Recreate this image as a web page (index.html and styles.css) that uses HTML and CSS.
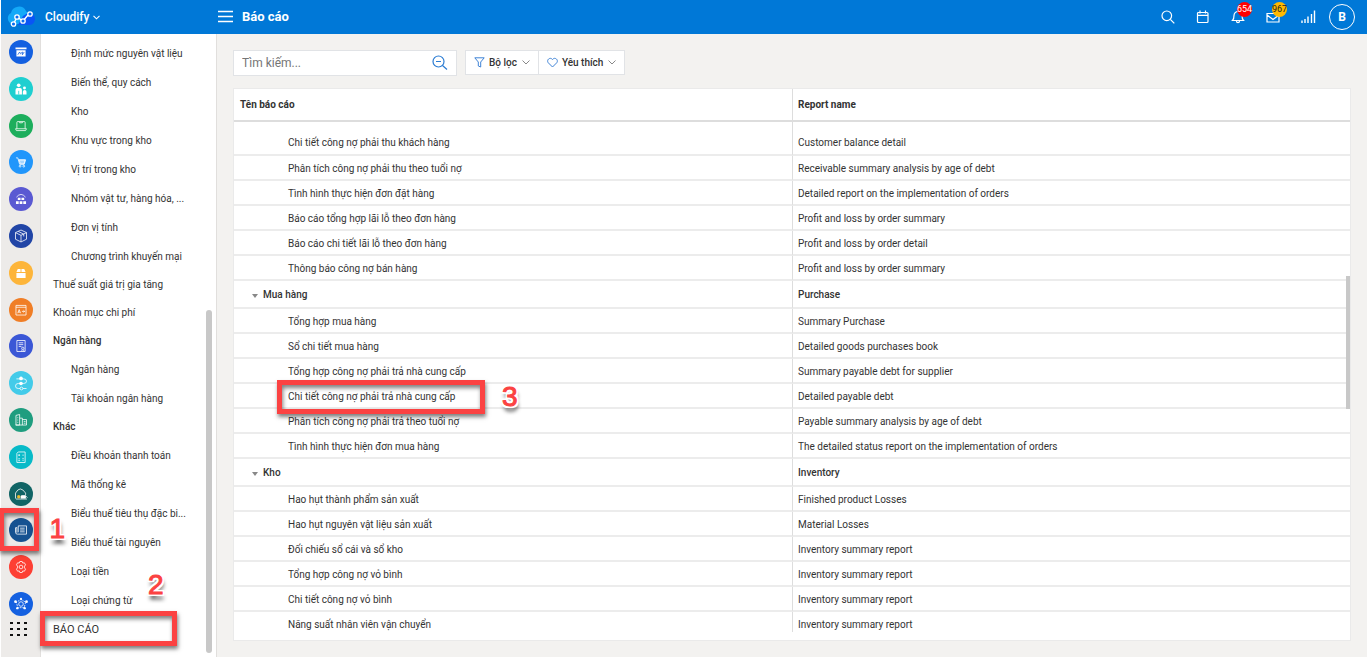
FILE: index.html
```html
<!DOCTYPE html>
<html lang="vi">
<head>
<meta charset="utf-8">
<title>Báo cáo</title>
<link rel="stylesheet" href="styles.css">
</head>
<body>
<header class="topbar">
  <svg class="logo" viewBox="0 0 30 24"><path d="M6 19a6 6 0 0 1-1-11A8 8 0 0 1 20 6l3 4-7 9z" fill="#14a9f8"/><path d="M12 20l5-9 5-3a6 6 0 0 1 2 12z" fill="#0a55f5"/><path d="M8 18l3-6 6 4 5-6" fill="none" stroke="#fff" stroke-width="1.400"/><g fill="#0a6cf0" stroke="#fff" stroke-width="1.300"><circle cx="7.500" cy="19" r="2.200"/><circle cx="11" cy="12" r="2.200"/><circle cx="17" cy="16" r="2.200"/><circle cx="24" cy="9" r="2.200"/></g></svg>
  <button class="brand">Cloudify <svg width="7" height="5" viewBox="0 0 7 5"><path d="M.5.8l3 3 3-3" fill="none" stroke="#fff" stroke-width="1.100"/></svg></button>
  <button class="menu" aria-label="Menu"><svg width="16" height="14" viewBox="0 0 16 14"><path d="M0 1.500h15M0 6.500h15M0 11.500h15" stroke="#fff" stroke-width="1.500"/></svg></button>
  <h1 class="title">Báo cáo</h1>
  <nav class="tools">
    <button aria-label="Tìm"><svg width="14" height="14" viewBox="0 0 14 14" fill="none" stroke="#fff" stroke-width="1.200"><circle cx="5.800" cy="5.800" r="4.800"/><path d="M9.300 9.300l4 4"/></svg></button>
    <button aria-label="Lịch"><svg width="14" height="14" viewBox="0 0 14 14" fill="none" stroke="#fff" stroke-width="1.200"><rect x="1.500" y="2.500" width="10.500" height="10" rx="1"/><path d="M1.500 5.300H12M4 .5v3M9.500.5v3"/></svg></button>
    <button aria-label="Thông báo"><svg width="14" height="14" viewBox="0 0 14 14" fill="none" stroke="#fff" stroke-width="1.200"><path d="M1.500 10.500h11c-1.500-1.500-1.500-3-1.500-5a4 4 0 0 0-8 0c0 2 0 3.500-1.500 5zM5.500 11c0 2.200 3 2.200 3 0"/></svg><span class="badge red">654</span></button>
    <button aria-label="Thư"><svg width="14" height="14" viewBox="0 0 14 14" fill="none" stroke="#fff" stroke-width="1.200"><path d="M1 3.500h12v8.500H1zM1 5l6 4.500L13 5"/></svg><span class="badge amber">967</span></button>
    <button aria-label="Tín hiệu"><svg width="15" height="14" viewBox="0 0 15 14"><path d="M1 10.500V13M4 9v4M7 6.500V13M10.500 4v9M13.500.5V13" stroke="#fff" stroke-width="1.400"/></svg></button>
    <button class="avatar">B</button>
  </nav>
</header>
<div class="shell">
  <aside class="rail">
    <div class="apps">
      <button class="app c1" aria-label="Bàn làm việc"><svg viewBox="0 0 24 24"><path class="solid" d="M6 7h12v2H6zM7 10h10v7H7z"/><path d="M8.500 15l2-3 1 2 2-2v3l2-3" stroke="#1460e0"/></svg></button>
      <button class="app c2" aria-label="Khách hàng"><svg viewBox="0 0 24 24"><g class="solid"><circle cx="9.500" cy="8" r="2"/><path d="M6 18v-5q0-2 2-2h3q2 0 2 2v5z"/><circle cx="15.800" cy="11" r="1.600"/><path d="M14 18v-3q0-2 2-2t2 2v3z"/></g><path d="M9.500 14v4" stroke="#1fcfd0"/></svg></button>
      <button class="app c3" aria-label="Bán hàng"><svg viewBox="0 0 24 24"><path d="M7.500 15V8q0-.8.8-.8h7.400q.8 0 .8.800v7M6 15h12l-1 2H7zM10.500 7.500v1h3v-1" /></svg></button>
      <button class="app c4" aria-label="Mua hàng"><svg viewBox="0 0 24 24"><path d="M6.500 7.500h2l2 7h5l1.500-5H9.300" /><path d="M10 10h6.500l-1.200 4h-4z" fill="#fff" fill-opacity=".6"/><circle cx="11" cy="16.500" r="1"/><circle cx="15" cy="16.500" r="1"/></svg></button>
      <button class="app c5" aria-label="Kho"><svg viewBox="0 0 24 24"><path d="M7 10q5-6 10 0"/><path class="solid" d="M8.500 10.500h3v2.700h-3zM12.500 10.500h3v2.700h-3zM6.500 14.500h3v3h-3zM10.500 14.500h3v3h-3zM14.500 14.500h3v3h-3z"/></svg></button>
      <button class="app c6" aria-label="Sản phẩm"><svg viewBox="0 0 24 24"><path d="M12 5.500l6 2.800v7.200l-6 3-6-3V8.300zM6 8.300l6 3 6-3M12 11.300v7M9 7l6 3v2.500"/></svg></button>
      <button class="app c7" aria-label="Tài sản"><svg viewBox="0 0 24 24"><path class="solid" d="M8.500 7.500h3v3.500H7zM12.500 7.500h3L17 11h-4.500zM7 12h10v5.500H7z"/></svg></button>
      <button class="app c8" aria-label="Công cụ"><svg viewBox="0 0 24 24"><path d="M6.500 7h11v10.500h-11zM6.500 9h11M8.500 15.500l1.500-4 1.500 4M9 14.300h2M13 13.500h3M14.700 12.300l1.300 1.200-1.300 1.200"/></svg></button>
      <button class="app c9" aria-label="Hóa đơn"><svg viewBox="0 0 24 24"><path d="M7.500 6h9v12h-9zM9.500 8.500h5M9.500 10.500h5M9.500 12.500h3"/><circle cx="14" cy="14.500" r="1.300"/><path d="M13 16v2M15 16v2"/></svg></button>
      <button class="app c10" aria-label="Quy trình"><svg viewBox="0 0 24 24"><path d="M7 7.500h4M13 7.500h2q3 0 3 2.500t-3 2.500H9q-3 0-3 2.800T9 18h2M14 18h4"/><circle class="solid" cx="12" cy="7" r="2"/><circle class="solid" cx="12" cy="12.500" r="2"/><circle cx="12.500" cy="18" r="1.500"/></svg></button>
      <button class="app c11" aria-label="Chi nhánh"><svg viewBox="0 0 24 24"><path d="M6.500 17.500V7l4-1v11.500zM10.500 10h3v7.500M13.500 11.500h4.500v6H6M8 9.500h1M8 12h1M8 14.500h1M15 13.500h2M15 15.500h2"/></svg></button>
      <button class="app c12" aria-label="Kế toán"><svg viewBox="0 0 24 24"><path d="M9 6.500h7.500V18h-9V8zM9 10h2M10 9v2M13.500 10h1.500M9 14h2M13.500 13.500h1.500M13.500 15.500h1.500M9 16h2"/></svg></button>
      <button class="app c13" aria-label="Vận chuyển"><svg viewBox="0 0 24 24"><path d="M6 17v-6q5-9 11 0v2M6.500 17.500h12M13 14h4l2 2"/><path d="M12 14h5v2.500h-5z" fill="#fff"/><circle cx="9.500" cy="15" r="1.800" fill="#e9bb32" stroke="none"/></svg></button>
      <div class="slot"><button class="app c14" aria-label="Báo cáo"><svg viewBox="0 0 24 24"><path d="M9 7.500h9v9H8q-2 0-2-2V9.500h1.500M9 7.500v7M7.500 9v6M11 10h5M11 12h5M11 14h5"/></svg></button><span class="mark mark-app"></span><span class="num num-1">1</span></div>
      <button class="app c15" aria-label="Cài đặt"><svg viewBox="0 0 24 24"><path d="M10.700 6h2.600l.6 1.700 1.800-.3 1.300 2.300-1.200 1.300v2l1.200 1.300-1.300 2.300-1.800-.3-.6 1.700h-2.600l-.6-1.700-1.800.3L7 14.300 8.200 13v-2L7 9.700l1.300-2.300 1.800.3z"/><circle cx="12" cy="12" r="2"/></svg></button>
      <button class="app c16" aria-label="Kết nối"><svg viewBox="0 0 24 24"><circle cx="12" cy="12" r="2.500"/><path d="M12 7l5 3-1.500 6h-7L7 10z" stroke-dasharray="2 1"/><g class="solid"><circle cx="12" cy="6.500" r="1.200"/><circle cx="6" cy="9.500" r="1.500"/><circle cx="18" cy="9.500" r="1.500"/><circle cx="8" cy="16.500" r="1.300"/><circle cx="16" cy="16.500" r="1.300"/></g></svg></button>
    </div>
    <button class="more" aria-label="Tất cả"><svg width="17" height="16" viewBox="0 0 17 16" fill="#111"><path d="M0 1h3v2H0zM7 1h3v2H7zM14 1h3v2h-3zM0 7h3v2H0zM7 7h3v2H7zM14 7h3v2h-3zM0 13h3v2H0zM7 13h3v2H7zM14 13h3v2h-3z"/></svg></button>
  </aside>
  <nav class="side">
    <a class="sub" href="#">Định mức nguyên vật liệu</a>
    <a class="sub" href="#">Biến thể, quy cách</a>
    <a class="sub" href="#">Kho</a>
    <a class="sub" href="#">Khu vực trong kho</a>
    <a class="sub" href="#">Vị trí trong kho</a>
    <a class="sub" href="#">Nhóm vật tư, hàng hóa, ...</a>
    <a class="sub" href="#">Đơn vị tính</a>
    <a class="sub" href="#">Chương trình khuyến mại</a>
    <a class="top" href="#">Thuế suất giá trị gia tăng</a>
    <a class="top" href="#">Khoản mục chi phí</a>
    <a class="top head" href="#">Ngân hàng</a>
    <a class="sub" href="#">Ngân hàng</a>
    <a class="sub" href="#">Tài khoản ngân hàng</a>
    <a class="top head" href="#">Khác</a>
    <a class="sub" href="#">Điều khoản thanh toán</a>
    <a class="sub" href="#">Mã thống kê</a>
    <a class="sub" href="#">Biểu thuế tiêu thụ đặc bi...</a>
    <a class="sub" href="#">Biểu thuế tài nguyên</a>
    <a class="sub" href="#">Loại tiền</a>
    <a class="sub" href="#">Loại chứng từ</a>
    <a class="top report" href="#">BÁO CÁO<span class="mark mark-side"></span><span class="num num-2">2</span></a>
    <span class="thumb side-thumb"></span>
  </nav>
  <main class="main">
    <div class="filters">
      <label class="search"><input type="text" placeholder="Tìm kiếm..." aria-label="Tìm kiếm"><svg width="16" height="16" viewBox="0 0 16 16" fill="none" stroke="#2b7cd3" stroke-width="1.200"><circle cx="6.500" cy="6.500" r="5.500"/><path d="M10.500 10.500l4.500 4M4 6.500h5"/></svg></label>
      <div class="group">
        <button class="pick"><svg width="11" height="11" viewBox="0 0 11 11" fill="none" stroke="#3f83d6"><path d="M.8.800h9.400L6.700 5v5L4.300 9V5z"/></svg>Bộ lọc<svg width="8" height="5" viewBox="0 0 8 5" fill="none" stroke="#888"><path d="M.5.500L4 4 7.500.500"/></svg></button>
        <button class="pick"><svg width="11" height="11" viewBox="0 0 11 11" fill="none" stroke="#3f83d6"><path d="M5.500 10L1.200 5.700C-.8 3 3-.5 5.500 2.500 8-.5 11.800 3 9.800 5.700z"/></svg>Yêu thích<svg width="8" height="5" viewBox="0 0 8 5" fill="none" stroke="#888"><path d="M.5.500L4 4 7.500.500"/></svg></button>
      </div>
    </div>
    <div class="card">
      <table class="grid">
        <thead><tr><th>Tên báo cáo</th><th>Report name</th></tr></thead>
        <tbody>
          <tr class="first"><td>Chi tiết công nợ phải thu khách hàng</td><td>Customer balance detail</td></tr>
          <tr><td>Phân tích công nợ phải thu theo tuổi nợ</td><td>Receivable summary analysis by age of debt</td></tr>
          <tr><td>Tình hình thực hiện đơn đặt hàng</td><td>Detailed report on the implementation of orders</td></tr>
          <tr><td>Báo cáo tổng hợp lãi lỗ theo đơn hàng</td><td>Profit and loss by order summary</td></tr>
          <tr><td>Báo cáo chi tiết lãi lỗ theo đơn hàng</td><td>Profit and loss by order detail</td></tr>
          <tr><td>Thông báo công nợ bán hàng</td><td>Profit and loss by order summary</td></tr>
          <tr class="cat"><td><span class="caret"></span>Mua hàng</td><td>Purchase</td></tr>
          <tr><td>Tổng hợp mua hàng</td><td>Summary Purchase</td></tr>
          <tr><td>Sổ chi tiết mua hàng</td><td>Detailed goods purchases book</td></tr>
          <tr><td>Tổng hợp công nợ phải trả nhà cung cấp</td><td>Summary payable debt for supplier</td></tr>
          <tr><td class="noted">Chi tiết công nợ phải trả nhà cung cấp<span class="mark mark-row"></span><span class="num num-3">3</span></td><td>Detailed payable debt</td></tr>
          <tr><td>Phân tích công nợ phải trả theo tuổi nợ</td><td>Payable summary analysis by age of debt</td></tr>
          <tr><td>Tình hình thực hiện đơn mua hàng</td><td>The detailed status report on the implementation of orders</td></tr>
          <tr class="cat"><td><span class="caret"></span>Kho</td><td>Inventory</td></tr>
          <tr><td>Hao hụt thành phẩm sản xuất</td><td>Finished product Losses</td></tr>
          <tr><td>Hao hụt nguyên vật liệu sản xuất</td><td>Material Losses</td></tr>
          <tr><td>Đối chiếu sổ cái và sổ kho</td><td>Inventory summary report</td></tr>
          <tr><td>Tổng hợp công nợ vỏ bình</td><td>Inventory summary report</td></tr>
          <tr><td>Chi tiết công nợ vỏ bình</td><td>Inventory summary report</td></tr>
          <tr class="last"><td>Năng suất nhân viên vận chuyển</td><td>Inventory summary report</td></tr>
        </tbody>
      </table>
      <span class="thumb card-thumb"></span>
    </div>
  </main>
</div>
</body>
</html>
```
FILE: styles.css
```css
* { box-sizing: border-box; }
body {
  margin: 0;
  min-height: 100vh;
  display: flex;
  flex-direction: column;
  padding-left: 1px;
  background: #fff;
  color: #333;
  font: 10px/14px Roboto, "Noto Sans", sans-serif;
}
button { border: 0; padding: 0; background: none; color: inherit; font: inherit; }
a { color: inherit; text-decoration: none; }

.topbar { display: flex; align-items: center; height: 34px; padding: 0 12px 0 5px; background: #0078d7; color: #fff; }
.logo { width: 30px; height: 24px; }
.brand { display: flex; align-items: center; gap: 4px; width: 182px; padding-left: 9px; font-size: 12px; font-weight: 500; }
.menu { display: flex; width: 24px; }
.title { margin: 0; font-size: 13px; font-weight: 700; }
.tools { display: flex; align-items: center; gap: 21px; margin-left: auto; }
.tools button { position: relative; display: flex; }
.tools .avatar { width: 26px; height: 26px; margin-left: -8px; border: 1px solid #fff; border-radius: 50%; align-items: center; justify-content: center; font-size: 12px; font-weight: 700; }
.badge { position: absolute; left: 6px; top: -8px; width: 15px; height: 15px; border-radius: 50%; font-size: 9px; line-height: 15px; display: flex; justify-content: center; }
.red { background: #f00; color: #fff; }
.amber { background: #ffb900; color: #222; }

.shell { flex: 1; display: flex; }
.rail { width: 40px; display: flex; flex-direction: column; padding-top: 6px; background: #edebe9; border-right: 1px solid #e1dfdd; }
.apps { flex: 1; display: flex; flex-direction: column; justify-content: space-between; align-items: center; }
.app { display: flex; width: 24px; height: 24px; border-radius: 50%; }
.app svg { width: 24px; height: 24px; padding: 1px; fill: none; stroke: #fff; stroke-opacity: .85; }
.app .solid { fill: #fff; stroke: none; }
.c1 { background: #1460e0; }
.c2 { background: #1fcfd0; }
.c3 { background: #1dae5c; }
.c4 { background: #2196fb; }
.c5 { background: #5a59d2; }
.c6 { background: #2145a6; }
.c7 { background: #fdb53a; }
.c8 { background: #f07e26; }
.c9 { background: #3b57d6; }
.c10 { background: #43cbe9; }
.c11 { background: #1f9d7f; }
.c12 { background: #08bac8; }
.c13 { background: #116465; }
.c14 { background: #165291; }
.c15 { background: #fd3f33; }
.c16 { background: #1460e0; }
.slot { position: relative; }
.more { display: flex; justify-content: center; height: 41px; padding: 5px 4px 0 0; }

.side { position: relative; width: 176px; display: flex; flex-direction: column; padding: 5px 8px 12px 12px; border-right: 1px solid #e1dfdd; background: #fff; white-space: nowrap; }
.sub { padding-left: 18px; line-height: 29px; }
.top { line-height: 28px; }
.head { font-weight: 500; }
.report { position: relative; font-size: 11px; line-height: 30px; }
.thumb { position: absolute; background: #c8c8c8; }
.side-thumb { right: 4px; top: 276px; bottom: 4px; width: 6px; border-radius: 3px; }

.main { flex: 1; padding: 16px; background: #f3f2f0; }
.filters { display: flex; gap: 8px; margin-bottom: 12px; }
.search { display: flex; align-items: center; width: 224px; height: 26px; padding: 0 8px; border: 1px solid #e1e3e6; background: #fff; }
.search input { flex: 1; min-width: 0; padding: 0; border: 0; outline: 0; background: none; font: 12px/16px Roboto, sans-serif; }
.search input::placeholder { color: #757575; }
.group { display: flex; height: 25px; border: 1px solid #e1e3e6; background: #fff; }
.pick { display: flex; align-items: center; gap: 4px; padding: 0 8px; font-weight: 500; }
.pick + .pick { border-left: 1px solid #e1e3e6; }
.pick svg:last-child { margin-left: 1px; }

.card { position: relative; padding-bottom: 8px; border: 1px solid #eaeaea; background: #fff; }
.grid { width: 100%; table-layout: fixed; border-collapse: separate; border-spacing: 0; text-align: left; }
.grid th { height: 33px; padding: 0 6px; border-bottom: 2px solid #ddd; font-weight: 700; }
.grid td { height: 25px; padding: 2px 5px 0; border-bottom: 2px solid #ececec; }
.grid td:first-child { padding-left: 54px; }
.grid th + th, .grid td + td { padding-left: 5px; border-left: 1px solid #ddd; }
.grid .first td { height: 34px; padding-top: 9px; }
.grid .last td { height: 20px; padding-top: 6px; border-bottom: 0; }
.grid .cat td { height: 28px; font-weight: 500; }
.grid .cat td:first-child { padding-left: 18px; }
.caret { display: inline-block; margin-right: 5px; border: 3px solid transparent; border-top: 4px solid #888; border-bottom: 0; }
.card-thumb { right: 0; top: 187px; width: 4px; height: 133px; }

.noted { position: relative; }
.mark { position: absolute; border: 5px solid #fb4242; box-shadow: 1px 3px 4px rgba(0,0,0,.5), inset 1px 3px 4px rgba(0,0,0,.5); pointer-events: none; z-index: 1; }
.mark-app { left: -10px; top: -10px; width: 40px; height: 43px; }
.mark-side { left: -13px; top: -4px; width: 137px; height: 35px; }
.mark-row { left: 43px; top: -4px; width: 208px; height: 34px; }
.num {
  position: absolute;
  z-index: 1;
  color: #fb4242;
  font: 400 28px/32px "Liberation Sans", sans-serif;
  -webkit-text-stroke: 1px #fb4242;
  text-shadow: 2px 0 #fff, -2px 0 #fff, 0 2px #fff, 0 -2px #fff, 2px 2px #fff, -2px 2px #fff, 2px -2px #fff, -2px -2px #fff, 1px 5px 4px rgba(0,0,0,.9);
}
.num-1 { left: 41px; top: -5px; }
.num-2 { left: 95px; top: -46px; }
.num-3 { left: 268px; top: -3px; }
```
